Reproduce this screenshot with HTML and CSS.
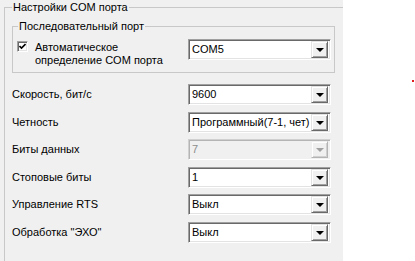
FILE: index.html
```html
<!DOCTYPE html>
<html>
<head>
    <title>Настройки COM порта</title>
    <link rel="stylesheet" href="styles.css">
</head>
<body>
    <div class="panel">
        <fieldset class="group outer">
            <legend>Настройки COM порта</legend>

            <fieldset class="group inner">
                <legend>Последовательный порт</legend>
                <div class="auto-row">
                    <label class="check">
                        <span class="box">
                            <svg width="7" height="7" viewBox="0 0 7 7"><polyline points="0.5,3 2.5,5 6.5,1" fill="none" stroke="#000" stroke-width="1.6"/></svg>
                        </span>
                        <span class="check-text">Автоматическое<br>определение COM порта</span>
                    </label>
                    <div class="combo"><span class="value">COM5</span><span class="arrow"></span></div>
                </div>
            </fieldset>

            <div class="rows">
                <div class="row">
                    <span class="label">Скорость, бит/с</span>
                    <div class="combo"><span class="value">9600</span><span class="arrow"></span></div>
                </div>
                <div class="row">
                    <span class="label">Четность</span>
                    <div class="combo"><span class="value">Программный(7-1, чет)</span><span class="arrow"></span></div>
                </div>
                <div class="row">
                    <span class="label">Биты данных</span>
                    <div class="combo disabled"><span class="value">7</span><span class="arrow"></span></div>
                </div>
                <div class="row">
                    <span class="label">Стоповые биты</span>
                    <div class="combo"><span class="value">1</span><span class="arrow"></span></div>
                </div>
                <div class="row">
                    <span class="label">Управление RTS</span>
                    <div class="combo"><span class="value">Выкл</span><span class="arrow"></span></div>
                </div>
                <div class="row">
                    <span class="label">Обработка "ЭХО"</span>
                    <div class="combo"><span class="value">Выкл</span><span class="arrow"></span></div>
                </div>
            </div>
        </fieldset>
    </div>
    <div class="side">
        <div class="mark"></div>
    </div>
</body>
</html>
```

FILE: styles.css
```css
body {
    margin: 0;
    background: #fff;
    font-family: "Liberation Sans", Arial, sans-serif;
    font-size: 11px;
    line-height: 13px;
    color: #000;
    display: flex;
    height: 261px;
    overflow: hidden;
}

.panel {
    width: 343px;
    height: 261px;
    background: #f0f0f0;
    overflow: hidden;
    flex-shrink: 0;
}

/* group boxes */
.group {
    margin: 0;
    border: 1px solid #c8c8c8;
    min-inline-size: 0;
}
.group legend {
    padding: 0 1px;
    line-height: 13px;
}

.outer {
    margin: 1px 0 0 4px;
    width: 360px;
    height: 300px;
    padding: 6px 0 0 7px;
}

.inner {
    width: 323px;
    box-sizing: border-box;
    padding: 6px 3px 5px 4px;
}
.inner legend {
    margin-left: 1px;
}

.auto-row {
    display: flex;
    justify-content: space-between;
    align-items: flex-start;
}

.check {
    display: flex;
    align-items: flex-start;
    gap: 7px;
    margin-top: 2px;
}
.box {
    width: 11px;
    height: 11px;
    box-sizing: border-box;
    border: 1px solid;
    border-color: #a0a0a0 #fff #fff #a0a0a0;
    box-shadow: inset 1px 1px 0 #696969, inset -1px -1px 0 #e3e3e3;
    background: #fff;
    display: flex;
    align-items: center;
    justify-content: center;
}
.box svg {
    display: block;
}

/* label + combo rows */
.rows {
    margin-top: 11px;
    display: flex;
    flex-direction: column;
    gap: 6.6px;
}
.row {
    display: flex;
    align-items: center;
}
.label {
    width: 176px;
}

/* combo boxes */
.combo {
    width: 143px;
    height: 21px;
    box-sizing: border-box;
    border: 1px solid;
    border-color: #a0a0a0 #fff #fff #a0a0a0;
    box-shadow: inset 1px 1px 0 #696969, inset -1px -1px 0 #e3e3e3;
    background: #fff;
    display: flex;
    align-items: center;
    padding: 2px;
}
.combo .value {
    flex: 1;
    padding-left: 1px;
    white-space: nowrap;
    overflow: hidden;
}
.combo .arrow {
    width: 17px;
    height: 17px;
    box-sizing: border-box;
    flex-shrink: 0;
    background: #f0f0f0;
    border: 1px solid;
    border-color: #e3e3e3 #696969 #696969 #e3e3e3;
    box-shadow: inset 1px 1px 0 #fff, inset -1px -1px 0 #a0a0a0;
    display: flex;
    align-items: center;
    justify-content: center;
}
.combo .arrow::after {
    content: "";
    border-left: 4px solid transparent;
    border-right: 4px solid transparent;
    border-top: 4px solid #000;
    margin-top: 1px;
}

.combo.disabled {
    background: #f0f0f0;
    border-color: #d0d0d0 #fff #fff #d0d0d0;
    box-shadow: inset 1px 1px 0 #b4b4b4, inset -1px -1px 0 #f0f0f0;
    color: #8d8d8d;
}
.combo.disabled .arrow {
    border-color: #f0f0f0 #b4b4b4 #b4b4b4 #f0f0f0;
    box-shadow: inset 1px 1px 0 #fff, inset -1px -1px 0 #d0d0d0;
}
.combo.disabled .arrow::after {
    border-top-color: #a0a0a0;
}

.side {
    padding: 80px 0 0 69px;
}
.mark {
    width: 2px;
    height: 2px;
    background: #e02020;
}
```
